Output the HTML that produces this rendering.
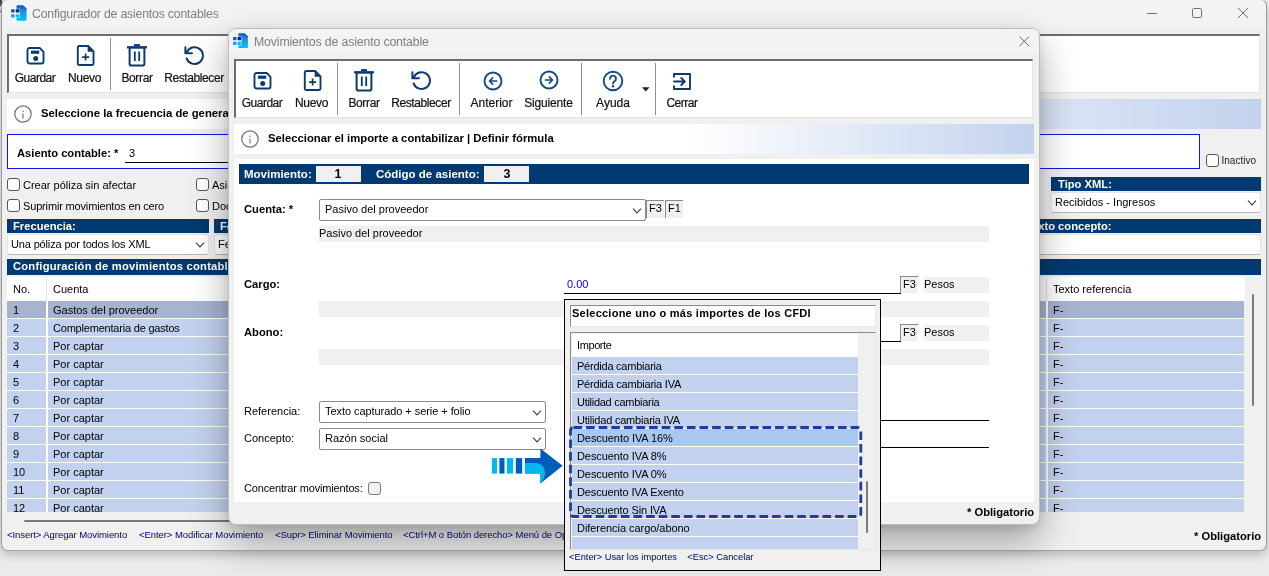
<!DOCTYPE html>
<html>
<head>
<meta charset="utf-8">
<title>Configurador de asientos contables</title>
<style>
*{box-sizing:border-box;margin:0;padding:0}
html,body{width:1269px;height:576px;overflow:hidden}
body{background:#ebebeb;font-family:"Liberation Sans",sans-serif;font-size:11px;color:#000;position:relative}
#root{position:absolute;left:0;top:0;width:1269px;height:576px;will-change:transform}
.abs{position:absolute}
.t{position:absolute;white-space:nowrap;line-height:14px}
.b{font-weight:bold}
#shadowbottom{display:none}
#win{left:1px;top:-1px;width:1266px;height:552px;background:#f0f0f0;border:1px solid #9a9a9a;border-top-color:#c8c8c8;border-bottom-color:#a8a8a8;border-radius:7px;box-shadow:0 4px 10px rgba(0,0,0,.21)}
#dlg{left:228px;top:28px;width:812px;height:497px;background:#f0f0f0;border:1px solid #bdbdbd;border-radius:8px;box-shadow:0 17px 38px rgba(0,0,0,.33),0 3px 10px rgba(0,0,0,.11)}
.title{color:#7f7f7f;font-size:12.3px}
.toolbar{background:#fff;border:1px solid #e3e3e3;border-top:2px solid #6d6d6d;border-left:2px solid #6d6d6d}
.tl{position:absolute;white-space:nowrap;font-size:12px;-webkit-text-stroke:.2px #111;color:#111;transform:translateX(-50%);line-height:14px}
.sep{position:absolute;width:1px;background:#8f8f8f}
.info{background:linear-gradient(90deg,#fff 0%,#fff 57%,#c3d2ee 100%)}
.ddf{background:#fff;border:1px solid #e4e4e4;border-bottom-color:#b8b8b8;border-radius:3px}
.bar{background:#003a70}
.gray{background:#f0f0f0}
.cb{position:absolute;width:13px;height:13px;border:1px solid #555;border-radius:3px;background:#fff}
.dd{position:absolute;background:#fff;border:1px solid #8a8a8a;border-radius:2px}
.fk{position:absolute;background:#f0f0f0;border-left:1px solid #8a8a8a;border-top:1px solid #8a8a8a;font-size:11px;line-height:14px;padding-left:2px}
.nav{color:#00007a}
svg{position:absolute;overflow:visible}
</style>
</head>
<body>
<div id="root">
<div class="abs" id="shadowbottom"></div>
<div class="abs " style="left:0px;top:0px;width:2px;height:6px;background:#454545"></div>
<div class="abs " style="left:0px;top:6px;width:2px;height:5px;background:#dcdcdc"></div>
<div class="abs " style="left:0px;top:11px;width:2px;height:1px;background:#6a6a6a"></div>
<div class="abs" id="win"></div>
<div class="abs " style="left:2px;top:0px;width:1264px;height:30px;background:linear-gradient(#f3f3f3,#f3f3f3 80%,#f0f0f0);border-radius:7px 7px 0 0"></div>
<svg style="left:10.5px;top:4.8px" width="16" height="16" viewBox="0 0 16 16"><defs><linearGradient id="ag10" x1="0" y1="0" x2="0" y2="1"><stop offset="0" stop-color="#0a5cc4"/><stop offset=".4" stop-color="#1a92df"/><stop offset="1" stop-color="#02c3f7"/></linearGradient></defs><path d="M6.5.200h5.2l3.8 3.3v11.2a1 1 0 0 1-1 1h-8a1 1 0 0 1-1-1v-13.5a1 1 0 0 1 1-1z" fill="url(#ag10)"/><path d="M11.7.200l3.8 3.3v.9l-4.5-3.8z" fill="#0a4ea8"/><rect x="4.2" y="3.7" width="4.8" height="9.3" rx=".9" fill="#f4f8ff" opacity=".92"/><rect x=".100" y="4.2" width="3.4" height="3.3" rx=".5" fill="#0a55b6"/><rect x="4.7" y="4.2" width="3.8" height="3.3" rx=".5" fill="#0a2f72"/><rect x=".100" y="9.2" width="3.4" height="3.3" rx=".5" fill="#1f97e6"/><rect x="4.7" y="9.2" width="3.8" height="3.3" rx=".5" fill="#0fbcf5"/></svg>
<div class="t title" style="left:32px;top:6px;line-height:16px;letter-spacing:-.2px">Configurador de asientos contables</div>
<svg style="left:1148px;top:7px" width="110" height="14" viewBox="0 0 110 14"><path d="M-1 6.5h10" stroke="#737373" stroke-width="1"/><rect x="44.5" y="1.5" width="9" height="9" rx="1.2" fill="none" stroke="#737373" stroke-width="1"/><path d="M90 1l10 10M100 1l-10 10" stroke="#737373" stroke-width="1"/></svg>
<div class="abs toolbar" style="left:7px;top:34px;width:1253px;height:59px;"></div>
<svg style="left:26.69999999999999px;top:47.3px" width="18" height="18" viewBox="0 0 18 18"><path d="M2.5 1h10.2l3.8 3.8v9.7a2 2 0 0 1-2 2h-12a2 2 0 0 1-2-2v-11.5a2 2 0 0 1 2-2z" fill="#fff" stroke="#0b3a6f" stroke-width="1.9" stroke-linejoin="round"/><rect x="4" y="3.6" width="8.2" height="3.2" fill="#0b3a6f"/><circle cx="8.7" cy="11.6" r="2.5" fill="#0b3a6f"/></svg>
<div class="tl" style="left:35px;top:71px;letter-spacing:-0.49px">Guardar</div>
<svg style="left:76.69999999999999px;top:45.2px" width="18" height="21" viewBox="0 0 18 21"><path d="M2.3 1h8.9l5.3 5.3v12.2a1.5 1.5 0 0 1-1.5 1.5h-12.7a1.5 1.5 0 0 1-1.5-1.5v-16a1.5 1.5 0 0 1 1.5-1.5z" fill="#fff" stroke="#0b3a6f" stroke-width="1.9" stroke-linejoin="round"/><path d="M10.6 1v5.8h5.8z" fill="#0b3a6f"/><path d="M8.6 8.6v7M5.1 12.1h7" stroke="#0b3a6f" stroke-width="1.7" fill="none"/></svg>
<div class="tl" style="left:84.5px;top:71px;letter-spacing:-0.3px">Nuevo</div>
<div class="sep" style="left:110px;top:38px;height:52px"></div>
<svg style="left:127px;top:44px" width="20" height="23" viewBox="0 0 20 23"><path d="M2.6 3.5h14.8v16.3a1.8 1.8 0 0 1-1.8 1.8h-11.2a1.8 1.8 0 0 1-1.8-1.8z" fill="#fff" stroke="#0b3a6f" stroke-width="2"/><path d="M0 3.3h20" stroke="#0b3a6f" stroke-width="2.2"/><path d="M7 1.1h6" stroke="#0b3a6f" stroke-width="2"/><path d="M7.8 7.5v9.5M12.2 7.5v9.5" stroke="#0b3a6f" stroke-width="1.8"/></svg>
<div class="tl" style="left:137px;top:71px;letter-spacing:-0.35px">Borrar</div>
<svg style="left:184px;top:45px" width="20" height="20" viewBox="0 0 20 20"><path d="M2.6 7.8A8.4 8.4 0 1 1 2.6 13.4" fill="none" stroke="#0b3a6f" stroke-width="2" stroke-linecap="round"/><path d="M1.4 2.2v6h6.6" fill="none" stroke="#0b3a6f" stroke-width="2" stroke-linecap="round" stroke-linejoin="miter"/></svg>
<div class="tl" style="left:194px;top:71px;letter-spacing:-0.4px">Restablecer</div>
<div class="abs info" style="left:7px;top:99px;width:1254px;height:30px;"></div>
<svg style="left:13.899999999999999px;top:104.7px" width="18" height="18" viewBox="0 0 18 18"><circle cx="9" cy="9" r="8.2" fill="#fff" stroke="#707070" stroke-width="1.2"/><path d="M9 8.4v5" stroke="#777" stroke-width="1.2"/><circle cx="9" cy="6.3" r=".8" fill="#777"/></svg>
<div class="t b" style="left:41px;top:106px;font-size:11.3px">Seleccione la frecuencia de generación de pólizas</div>
<div class="abs " style="left:7px;top:134px;width:1193px;height:35px;background:#fff;border:1px solid #1414e8"></div>
<div class="t b" style="left:17px;top:146px;font-size:11.2px">Asiento contable: *</div>
<div class="t " style="left:129px;top:146.3px;">3</div>
<div class="abs " style="left:125px;top:162px;width:500px;height:1px;background:#000"></div>
<div class="cb" style="left:1206px;top:154px"></div>
<div class="t " style="left:1221.5px;top:153.5px;font-size:10px;color:#222">Inactivo</div>
<div class="cb" style="left:7px;top:178px"></div>
<div class="t " style="left:23px;top:178px;">Crear póliza sin afectar</div>
<div class="cb" style="left:7px;top:199px"></div>
<div class="t " style="left:23px;top:199px;letter-spacing:-.16px">Suprimir movimientos en cero</div>
<div class="cb" style="left:196px;top:178px"></div>
<div class="t " style="left:212px;top:178px;">Asignar</div>
<div class="cb" style="left:196px;top:199px"></div>
<div class="t " style="left:212px;top:199px;">Documento</div>
<div class="abs bar" style="left:7px;top:219px;width:202px;height:14px;"></div>
<div class="t b" style="left:13px;top:219px;color:#fff;font-size:11.2px">Frecuencia:</div>
<div class="abs ddf" style="left:7px;top:234px;width:202px;height:21px;"></div>
<div class="t " style="left:11px;top:237px;letter-spacing:-.15px">Una póliza por todos los XML</div>
<svg style="left:195px;top:241.89999999999998px" width="10" height="6" viewBox="0 0 10 6"><path d="M1 .700l4 4.2 4-4.2" fill="none" stroke="#3c3c3c" stroke-width="1.1"/></svg>
<div class="abs bar" style="left:214px;top:219px;width:200px;height:14px;"></div>
<div class="t b" style="left:220px;top:219px;color:#fff;font-size:11.2px">Fecha:</div>
<div class="abs ddf" style="left:214px;top:234px;width:200px;height:21px;"></div>
<div class="t " style="left:218px;top:237px;">Fecha</div>
<div class="abs bar" style="left:1051px;top:177px;width:210px;height:14px;"></div>
<div class="t b" style="left:1058px;top:177px;color:#fff;font-size:11.2px">Tipo XML:</div>
<div class="abs ddf" style="left:1051px;top:192px;width:210px;height:21px;"></div>
<div class="t " style="left:1055px;top:195px;">Recibidos - Ingresos</div>
<svg style="left:1247px;top:199.89999999999998px" width="10" height="6" viewBox="0 0 10 6"><path d="M1 .700l4 4.2 4-4.2" fill="none" stroke="#3c3c3c" stroke-width="1.1"/></svg>
<div class="abs bar" style="left:800px;top:219px;width:461px;height:14px;"></div>
<div class="t b" style="left:1026px;top:219px;color:#fff;font-size:11.2px">Texto concepto:</div>
<div class="abs ddf" style="left:800px;top:234px;width:461px;height:21px;"></div>
<div class="abs bar" style="left:7px;top:259px;width:1254px;height:16px;"></div>
<div class="t b" style="left:13px;top:259px;color:#fff;font-size:11.2px;letter-spacing:.22px">Configuración de movimientos contables</div>
<div class="abs " style="left:7px;top:277px;width:1238px;height:24px;background:#fff"></div>
<div class="abs " style="left:7px;top:301px;width:1237px;height:211px;background:#fff"></div>
<div class="t " style="left:13px;top:282px;">No.</div>
<div class="t " style="left:53px;top:282px;">Cuenta</div>
<div class="t " style="left:1053px;top:282px;">Texto referencia</div>
<div class="abs " style="left:46px;top:277px;width:1px;height:24px;background:#e2e2e2"></div>
<div class="abs " style="left:1046px;top:277px;width:1px;height:24px;background:#e2e2e2"></div>
<div class="abs " style="left:7px;top:301px;width:39px;height:17px;background:#a6b4d0;overflow:hidden"><div class="t" style="left:6px;top:2px">1</div></div>
<div class="abs " style="left:48px;top:301px;width:998px;height:17px;background:#a6b4d0;overflow:hidden"><div class="t" style="left:5px;top:2px">Gastos del proveedor</div></div>
<div class="abs " style="left:1048px;top:301px;width:196px;height:17px;background:#a6b4d0;overflow:hidden"><div class="t" style="left:5px;top:2px">F-</div></div>
<div class="abs " style="left:7px;top:319px;width:39px;height:17px;background:#c2d1ee;overflow:hidden"><div class="t" style="left:6px;top:2px">2</div></div>
<div class="abs " style="left:48px;top:319px;width:998px;height:17px;background:#c2d1ee;overflow:hidden"><div class="t" style="left:5px;top:2px"><span style="letter-spacing:-.2px">Complementaria de gastos</span></div></div>
<div class="abs " style="left:1048px;top:319px;width:196px;height:17px;background:#c2d1ee;overflow:hidden"><div class="t" style="left:5px;top:2px">F-</div></div>
<div class="abs " style="left:7px;top:337px;width:39px;height:17px;background:#c2d1ee;overflow:hidden"><div class="t" style="left:6px;top:2px">3</div></div>
<div class="abs " style="left:48px;top:337px;width:998px;height:17px;background:#c2d1ee;overflow:hidden"><div class="t" style="left:5px;top:2px">Por captar</div></div>
<div class="abs " style="left:1048px;top:337px;width:196px;height:17px;background:#c2d1ee;overflow:hidden"><div class="t" style="left:5px;top:2px">F-</div></div>
<div class="abs " style="left:7px;top:355px;width:39px;height:17px;background:#c2d1ee;overflow:hidden"><div class="t" style="left:6px;top:2px">4</div></div>
<div class="abs " style="left:48px;top:355px;width:998px;height:17px;background:#c2d1ee;overflow:hidden"><div class="t" style="left:5px;top:2px">Por captar</div></div>
<div class="abs " style="left:1048px;top:355px;width:196px;height:17px;background:#c2d1ee;overflow:hidden"><div class="t" style="left:5px;top:2px">F-</div></div>
<div class="abs " style="left:7px;top:373px;width:39px;height:17px;background:#c2d1ee;overflow:hidden"><div class="t" style="left:6px;top:2px">5</div></div>
<div class="abs " style="left:48px;top:373px;width:998px;height:17px;background:#c2d1ee;overflow:hidden"><div class="t" style="left:5px;top:2px">Por captar</div></div>
<div class="abs " style="left:1048px;top:373px;width:196px;height:17px;background:#c2d1ee;overflow:hidden"><div class="t" style="left:5px;top:2px">F-</div></div>
<div class="abs " style="left:7px;top:391px;width:39px;height:17px;background:#c2d1ee;overflow:hidden"><div class="t" style="left:6px;top:2px">6</div></div>
<div class="abs " style="left:48px;top:391px;width:998px;height:17px;background:#c2d1ee;overflow:hidden"><div class="t" style="left:5px;top:2px">Por captar</div></div>
<div class="abs " style="left:1048px;top:391px;width:196px;height:17px;background:#c2d1ee;overflow:hidden"><div class="t" style="left:5px;top:2px">F-</div></div>
<div class="abs " style="left:7px;top:409px;width:39px;height:17px;background:#c2d1ee;overflow:hidden"><div class="t" style="left:6px;top:2px">7</div></div>
<div class="abs " style="left:48px;top:409px;width:998px;height:17px;background:#c2d1ee;overflow:hidden"><div class="t" style="left:5px;top:2px">Por captar</div></div>
<div class="abs " style="left:1048px;top:409px;width:196px;height:17px;background:#c2d1ee;overflow:hidden"><div class="t" style="left:5px;top:2px">F-</div></div>
<div class="abs " style="left:7px;top:427px;width:39px;height:17px;background:#c2d1ee;overflow:hidden"><div class="t" style="left:6px;top:2px">8</div></div>
<div class="abs " style="left:48px;top:427px;width:998px;height:17px;background:#c2d1ee;overflow:hidden"><div class="t" style="left:5px;top:2px">Por captar</div></div>
<div class="abs " style="left:1048px;top:427px;width:196px;height:17px;background:#c2d1ee;overflow:hidden"><div class="t" style="left:5px;top:2px">F-</div></div>
<div class="abs " style="left:7px;top:445px;width:39px;height:17px;background:#c2d1ee;overflow:hidden"><div class="t" style="left:6px;top:2px">9</div></div>
<div class="abs " style="left:48px;top:445px;width:998px;height:17px;background:#c2d1ee;overflow:hidden"><div class="t" style="left:5px;top:2px">Por captar</div></div>
<div class="abs " style="left:1048px;top:445px;width:196px;height:17px;background:#c2d1ee;overflow:hidden"><div class="t" style="left:5px;top:2px">F-</div></div>
<div class="abs " style="left:7px;top:463px;width:39px;height:17px;background:#c2d1ee;overflow:hidden"><div class="t" style="left:6px;top:2px">10</div></div>
<div class="abs " style="left:48px;top:463px;width:998px;height:17px;background:#c2d1ee;overflow:hidden"><div class="t" style="left:5px;top:2px">Por captar</div></div>
<div class="abs " style="left:1048px;top:463px;width:196px;height:17px;background:#c2d1ee;overflow:hidden"><div class="t" style="left:5px;top:2px">F-</div></div>
<div class="abs " style="left:7px;top:481px;width:39px;height:17px;background:#c2d1ee;overflow:hidden"><div class="t" style="left:6px;top:2px">11</div></div>
<div class="abs " style="left:48px;top:481px;width:998px;height:17px;background:#c2d1ee;overflow:hidden"><div class="t" style="left:5px;top:2px">Por captar</div></div>
<div class="abs " style="left:1048px;top:481px;width:196px;height:17px;background:#c2d1ee;overflow:hidden"><div class="t" style="left:5px;top:2px">F-</div></div>
<div class="abs " style="left:7px;top:499px;width:39px;height:13px;background:#c2d1ee;overflow:hidden"><div class="t" style="left:6px;top:2px">12</div></div>
<div class="abs " style="left:48px;top:499px;width:998px;height:13px;background:#c2d1ee;overflow:hidden"><div class="t" style="left:5px;top:2px">Por captar</div></div>
<div class="abs " style="left:1048px;top:499px;width:196px;height:13px;background:#c2d1ee;overflow:hidden"><div class="t" style="left:5px;top:2px">F-</div></div>
<div class="abs " style="left:1252px;top:294px;width:2px;height:112px;background:#7a7a7a;border-radius:1px"></div>
<div class="abs " style="left:24px;top:520px;width:1000px;height:2px;background:#7a7a7a;border-radius:1px"></div>
<div class="t nav" style="left:7px;top:528px;font-size:9.5px;letter-spacing:-.07px">&lt;Insert&gt; Agregar Movimiento</div>
<div class="t nav" style="left:139px;top:528px;font-size:9.5px;letter-spacing:-.07px">&lt;Enter&gt; Modificar Movimiento</div>
<div class="t nav" style="left:275px;top:528px;font-size:9.5px;letter-spacing:-.07px">&lt;Supr&gt; Eliminar Movimiento</div>
<div class="t nav" style="left:403px;top:528px;font-size:9.5px;letter-spacing:-.07px">&lt;Ctrl+M o Botón derecho&gt; Menú de Opciones</div>
<div class="t b" style="left:1194px;top:529px;font-size:11.2px">* Obligatorio</div>
<div class="abs" id="dlg"></div>
<div class="abs " style="left:229px;top:29px;width:810px;height:27px;background:linear-gradient(#f3f3f3,#f3f3f3 80%,#f0f0f0);border-radius:7px 7px 0 0"></div>
<svg style="left:232.6px;top:33.4px" width="15.4" height="15.4" viewBox="0 0 16 16"><defs><linearGradient id="ag232" x1="0" y1="0" x2="0" y2="1"><stop offset="0" stop-color="#0a5cc4"/><stop offset=".4" stop-color="#1a92df"/><stop offset="1" stop-color="#02c3f7"/></linearGradient></defs><path d="M6.5.200h5.2l3.8 3.3v11.2a1 1 0 0 1-1 1h-8a1 1 0 0 1-1-1v-13.5a1 1 0 0 1 1-1z" fill="url(#ag232)"/><path d="M11.7.200l3.8 3.3v.9l-4.5-3.8z" fill="#0a4ea8"/><rect x="4.2" y="3.7" width="4.8" height="9.3" rx=".9" fill="#f4f8ff" opacity=".92"/><rect x=".100" y="4.2" width="3.4" height="3.3" rx=".5" fill="#0a55b6"/><rect x="4.7" y="4.2" width="3.8" height="3.3" rx=".5" fill="#0a2f72"/><rect x=".100" y="9.2" width="3.4" height="3.3" rx=".5" fill="#1f97e6"/><rect x="4.7" y="9.2" width="3.8" height="3.3" rx=".5" fill="#0fbcf5"/></svg>
<div class="t title" style="left:254px;top:33.5px;line-height:16px;letter-spacing:-.14px">Movimientos de asiento contable</div>
<svg style="left:1018.5px;top:36px" width="11" height="11" viewBox="0 0 11 11"><path d="M.500.5l9.6 9.6M10.1.500l-9.6 9.6" stroke="#6a6a6a" stroke-width="1"/></svg>
<div class="abs toolbar" style="left:234px;top:59px;width:799px;height:59px;"></div>
<svg style="left:253.7px;top:72.3px" width="18" height="18" viewBox="0 0 18 18"><path d="M2.5 1h10.2l3.8 3.8v9.7a2 2 0 0 1-2 2h-12a2 2 0 0 1-2-2v-11.5a2 2 0 0 1 2-2z" fill="#fff" stroke="#0b3a6f" stroke-width="1.9" stroke-linejoin="round"/><rect x="4" y="3.6" width="8.2" height="3.2" fill="#0b3a6f"/><circle cx="8.7" cy="11.6" r="2.5" fill="#0b3a6f"/></svg>
<div class="tl" style="left:262px;top:96px;letter-spacing:-0.49px">Guardar</div>
<svg style="left:303.7px;top:70.2px" width="18" height="21" viewBox="0 0 18 21"><path d="M2.3 1h8.9l5.3 5.3v12.2a1.5 1.5 0 0 1-1.5 1.5h-12.7a1.5 1.5 0 0 1-1.5-1.5v-16a1.5 1.5 0 0 1 1.5-1.5z" fill="#fff" stroke="#0b3a6f" stroke-width="1.9" stroke-linejoin="round"/><path d="M10.6 1v5.8h5.8z" fill="#0b3a6f"/><path d="M8.6 8.6v7M5.1 12.1h7" stroke="#0b3a6f" stroke-width="1.7" fill="none"/></svg>
<div class="tl" style="left:311.5px;top:96px;letter-spacing:-0.3px">Nuevo</div>
<div class="sep" style="left:337px;top:63px;height:52px"></div>
<svg style="left:354px;top:69px" width="20" height="23" viewBox="0 0 20 23"><path d="M2.6 3.5h14.8v16.3a1.8 1.8 0 0 1-1.8 1.8h-11.2a1.8 1.8 0 0 1-1.8-1.8z" fill="#fff" stroke="#0b3a6f" stroke-width="2"/><path d="M0 3.3h20" stroke="#0b3a6f" stroke-width="2.2"/><path d="M7 1.1h6" stroke="#0b3a6f" stroke-width="2"/><path d="M7.8 7.5v9.5M12.2 7.5v9.5" stroke="#0b3a6f" stroke-width="1.8"/></svg>
<div class="tl" style="left:364px;top:96px;letter-spacing:-0.35px">Borrar</div>
<svg style="left:411px;top:70px" width="20" height="20" viewBox="0 0 20 20"><path d="M2.6 7.8A8.4 8.4 0 1 1 2.6 13.4" fill="none" stroke="#0b3a6f" stroke-width="2" stroke-linecap="round"/><path d="M1.4 2.2v6h6.6" fill="none" stroke="#0b3a6f" stroke-width="2" stroke-linecap="round" stroke-linejoin="miter"/></svg>
<div class="tl" style="left:421px;top:96px;letter-spacing:-0.4px">Restablecer</div>
<div class="sep" style="left:459px;top:63px;height:52px"></div>
<svg style="left:482.6px;top:71.4px" width="20" height="20" viewBox="0 0 20 20"><circle cx="10" cy="10" r="8.5" fill="#fff" stroke="#174a7e" stroke-width="1.9"/><path d="M13.6 10h-6.8M9.6 6.9l-3.1 3.1 3.1 3.1" fill="none" stroke="#174a7e" stroke-width="1.7" stroke-linecap="round" stroke-linejoin="round"/></svg>
<div class="tl" style="left:491.5px;top:96px;letter-spacing:0px">Anterior</div>
<svg style="left:538.5px;top:70.4px" width="20" height="20" viewBox="0 0 20 20"><circle cx="10" cy="10" r="8.5" fill="#fff" stroke="#174a7e" stroke-width="1.9"/><path d="M6.4 10h6.8M10.4 6.9l3.1 3.1-3.1 3.1" fill="none" stroke="#174a7e" stroke-width="1.7" stroke-linecap="round" stroke-linejoin="round"/></svg>
<div class="tl" style="left:548.5px;top:96px;letter-spacing:-0.17px">Siguiente</div>
<div class="sep" style="left:581px;top:63px;height:52px"></div>
<svg style="left:602.2px;top:70px" width="22" height="22" viewBox="0 0 22 22"><circle cx="11" cy="11" r="9.3" fill="#fff" stroke="#174a7e" stroke-width="1.9"/><path d="M8 8.7a3 3 0 1 1 4.6 2.5c-1.1.7-1.6 1.2-1.6 2.4" fill="none" stroke="#174a7e" stroke-width="1.9" stroke-linecap="round"/><circle cx="11" cy="16.2" r="1.2" fill="#174a7e"/></svg>
<div class="tl" style="left:613px;top:96px;letter-spacing:0px">Ayuda</div>
<svg style="left:642px;top:87px" width="8" height="5" viewBox="0 0 8 5"><path d="M0 .300h7.5l-3.75 4.2z" fill="#222"/></svg>
<div class="sep" style="left:655px;top:63px;height:52px"></div>
<svg style="left:673px;top:72.6px" width="18" height="17" viewBox="0 0 18 17"><path d="M1 4.5v-3.5h16v15h-16v-3.5" fill="none" stroke="#0b3a6f" stroke-width="1.9" stroke-linejoin="round"/><path d="M1 8.5h10.5M8.3 5l3.5 3.5-3.5 3.5" fill="none" stroke="#0b3a6f" stroke-width="1.8" stroke-linecap="round" stroke-linejoin="round"/></svg>
<div class="tl" style="left:682px;top:96px;letter-spacing:-0.48px">Cerrar</div>
<div class="abs info" style="left:234px;top:124px;width:800px;height:30px;"></div>
<svg style="left:241px;top:129.7px" width="18" height="18" viewBox="0 0 18 18"><circle cx="9" cy="9" r="8.2" fill="#fff" stroke="#707070" stroke-width="1.2"/><path d="M9 8.4v5" stroke="#777" stroke-width="1.2"/><circle cx="9" cy="6.3" r=".8" fill="#777"/></svg>
<div class="t b" style="left:268px;top:131px;font-size:11.3px">Seleccionar el importe a contabilizar | Definir fórmula</div>
<div class="abs " style="left:234px;top:159px;width:800px;height:343px;background:#fff"></div>
<div class="abs bar" style="left:239px;top:164px;width:790px;height:20px;"></div>
<div class="t b" style="left:244px;top:167px;color:#fff;font-size:11.5px">Movimiento:</div>
<div class="abs gray" style="left:316px;top:166px;width:45px;height:16px;"></div>
<div class="t b" style="left:334.5px;top:167px;font-size:12.5px">1</div>
<div class="t b" style="left:376px;top:167px;color:#fff;font-size:11.5px">Código de asiento:</div>
<div class="abs gray" style="left:484px;top:166px;width:45px;height:16px;"></div>
<div class="t b" style="left:503.5px;top:167px;font-size:12.5px">3</div>
<div class="t b" style="left:244px;top:202px;font-size:11.2px">Cuenta: *</div>
<div class="dd" style="left:319px;top:199px;width:327px;height:22px"></div>
<div class="t " style="left:325px;top:201.7px;">Pasivo del proveedor</div>
<svg style="left:632px;top:208.2px" width="10" height="6" viewBox="0 0 10 6"><path d="M1 .700l4 4.2 4-4.2" fill="none" stroke="#3c3c3c" stroke-width="1.1"/></svg>
<div class="fk" style="left:646px;top:200px;width:18px;height:18px">F3</div>
<div class="fk" style="left:665px;top:200px;width:18px;height:18px">F1</div>
<div class="abs gray" style="left:319px;top:226px;width:670px;height:16px;"></div>
<div class="t " style="left:319px;top:226px;">Pasivo del proveedor</div>
<div class="t b" style="left:244px;top:277px;font-size:11.2px">Cargo:</div>
<div class="t " style="left:567px;top:277px;color:#0000e0">0.00</div>
<div class="abs " style="left:564px;top:293px;width:337px;height:1px;background:#000"></div>
<div class="fk" style="left:900px;top:276px;width:18px;height:17px">F3</div>
<div class="abs gray" style="left:924px;top:277px;width:65px;height:16px;"></div>
<div class="t " style="left:924px;top:277px;">Pesos</div>
<div class="abs gray" style="left:319px;top:301px;width:670px;height:16px;"></div>
<div class="t b" style="left:244px;top:325px;font-size:11.2px">Abono:</div>
<div class="abs " style="left:564px;top:341px;width:337px;height:1px;background:#000"></div>
<div class="fk" style="left:900px;top:324px;width:18px;height:17px">F3</div>
<div class="abs gray" style="left:924px;top:325px;width:65px;height:16px;"></div>
<div class="t " style="left:924px;top:325px;">Pesos</div>
<div class="abs gray" style="left:319px;top:349px;width:670px;height:16px;"></div>
<div class="t " style="left:244px;top:404px;">Referencia:</div>
<div class="dd" style="left:319px;top:401px;width:227px;height:22px"></div>
<div class="t " style="left:325px;top:403.7px;letter-spacing:-.06px">Texto capturado + serie + folio</div>
<svg style="left:532.1px;top:409.9px" width="10" height="6" viewBox="0 0 10 6"><path d="M1 .700l4 4.2 4-4.2" fill="none" stroke="#3c3c3c" stroke-width="1.1"/></svg>
<div class="abs " style="left:880px;top:420px;width:109px;height:1px;background:#000"></div>
<div class="t " style="left:244px;top:431px;">Concepto:</div>
<div class="dd" style="left:319px;top:428px;width:227px;height:22px"></div>
<div class="t " style="left:325px;top:430.7px;">Razón social</div>
<svg style="left:532.1px;top:436.9px" width="10" height="6" viewBox="0 0 10 6"><path d="M1 .700l4 4.2 4-4.2" fill="none" stroke="#3c3c3c" stroke-width="1.1"/></svg>
<div class="abs " style="left:880px;top:447px;width:109px;height:1px;background:#000"></div>
<div class="t " style="left:244px;top:481px;letter-spacing:-.16px">Concentrar movimientos:</div>
<div class="cb" style="left:368px;top:482px;background:#f1f1f1;border-color:#7a7a7a"></div>
<div class="t b" style="left:967px;top:505px;font-size:11.2px">* Obligatorio</div>
<svg style="left:490px;top:447px" width="75" height="38" viewBox="0 0 75 38"><rect x="1.9" y="11.1" width="5.1" height="15.5" fill="#00b8ee"/><rect x="9.4" y="11.1" width="5.1" height="15.5" fill="#005cb9"/><rect x="17" y="11.1" width="6.2" height="15.5" fill="#00b8ee"/><rect x="25.8" y="11.1" width="6.4" height="15.5" fill="#005cb9"/><path d="M34.9 11.1h15.5v-9.7l22.2 17.4-22.2 17.7v-9.9h-15.5z" fill="#005cb9"/><path d="M34.9 15.9h10.1c6 0 10 4.1 10 10.1 0 4-2 8-4.6 10.5v-9.9h-15.5z" fill="#00b8ee"/></svg>
<div class="abs " style="left:564px;top:299px;width:317px;height:272px;background:#f0f0f0;border:1px solid #000"></div>
<div class="abs " style="left:570px;top:305px;width:306px;height:22px;background:#fff;border-top:1px solid #8a8a8a;border-left:1px solid #8a8a8a;border-bottom:1px solid #e8e8e8;border-right:1px solid #e8e8e8"></div>
<div class="t b" style="left:572px;top:305.6px;font-size:11px;letter-spacing:.250px">Seleccione uno o más importes de los CFDI</div>
<div class="abs " style="left:570px;top:332px;width:306px;height:218px;background:#f0f0f0;border-top:1px solid #8a8a8a;border-left:1px solid #8a8a8a;border-bottom:1px solid #e8e8e8;border-right:1px solid #e8e8e8"></div>
<div class="abs " style="left:572px;top:334px;width:286px;height:215px;background:#fff"></div>
<div class="t " style="left:577px;top:338px;letter-spacing:-.4px">Importe</div>
<div class="abs " style="left:572px;top:357px;width:286px;height:17px;background:#c2d1ee;overflow:hidden"><div class="t" style="left:5px;top:2px;letter-spacing:-0.233px">Pérdida cambiaria</div></div>
<div class="abs " style="left:572px;top:375px;width:286px;height:17px;background:#c2d1ee;overflow:hidden"><div class="t" style="left:5px;top:2px;letter-spacing:-0.215px">Pérdida cambiaria IVA</div></div>
<div class="abs " style="left:572px;top:393px;width:286px;height:17px;background:#c2d1ee;overflow:hidden"><div class="t" style="left:5px;top:2px;letter-spacing:-0.28px">Utilidad cambiaria</div></div>
<div class="abs " style="left:572px;top:411px;width:286px;height:17px;background:#c2d1ee;overflow:hidden"><div class="t" style="left:5px;top:2px;letter-spacing:-0.205px">Utilidad cambiaria IVA</div></div>
<div class="abs " style="left:572px;top:429px;width:286px;height:17px;background:#a9c8f0;overflow:hidden"><div class="t" style="left:5px;top:2px;letter-spacing:-0.072px">Descuento IVA 16%</div></div>
<div class="abs " style="left:572px;top:447px;width:286px;height:17px;background:#c2d1ee;overflow:hidden"><div class="t" style="left:5px;top:2px;letter-spacing:-0.088px">Descuento IVA 8%</div></div>
<div class="abs " style="left:572px;top:465px;width:286px;height:17px;background:#c2d1ee;overflow:hidden"><div class="t" style="left:5px;top:2px;letter-spacing:-0.088px">Descuento IVA 0%</div></div>
<div class="abs " style="left:572px;top:483px;width:286px;height:17px;background:#c2d1ee;overflow:hidden"><div class="t" style="left:5px;top:2px;letter-spacing:-0.123px">Descuento IVA Exento</div></div>
<div class="abs " style="left:572px;top:501px;width:286px;height:17px;background:#c2d1ee;overflow:hidden"><div class="t" style="left:5px;top:2px;letter-spacing:-0.119px">Descuento Sin IVA</div></div>
<div class="abs " style="left:572px;top:519px;width:286px;height:17px;background:#c2d1ee;overflow:hidden"><div class="t" style="left:5px;top:2px;letter-spacing:-0.048px">Diferencia cargo/abono</div></div>
<div class="abs " style="left:572px;top:537px;width:286px;height:12px;background:#c2d1ee;overflow:hidden"><div class="t" style="left:5px;top:2px;letter-spacing:0px"></div></div>
<div class="abs " style="left:866px;top:481px;width:2px;height:52px;background:#7a7a7a;border-radius:1px"></div>
<svg style="left:567.5px;top:425.4px" width="297" height="94" viewBox="0 0 297 94"><rect x="2.5" y="2.5" width="290.3" height="89" rx="3" fill="none" stroke="#1f3d99" stroke-width="2.8" stroke-dasharray="8.6 4"/></svg>
<div class="t nav" style="left:569px;top:550px;font-size:9.3px">&lt;Enter&gt; Usar los importes&nbsp;&nbsp;&nbsp;&nbsp;&lt;Esc&gt; Cancelar</div>
</div>
</body>
</html>
